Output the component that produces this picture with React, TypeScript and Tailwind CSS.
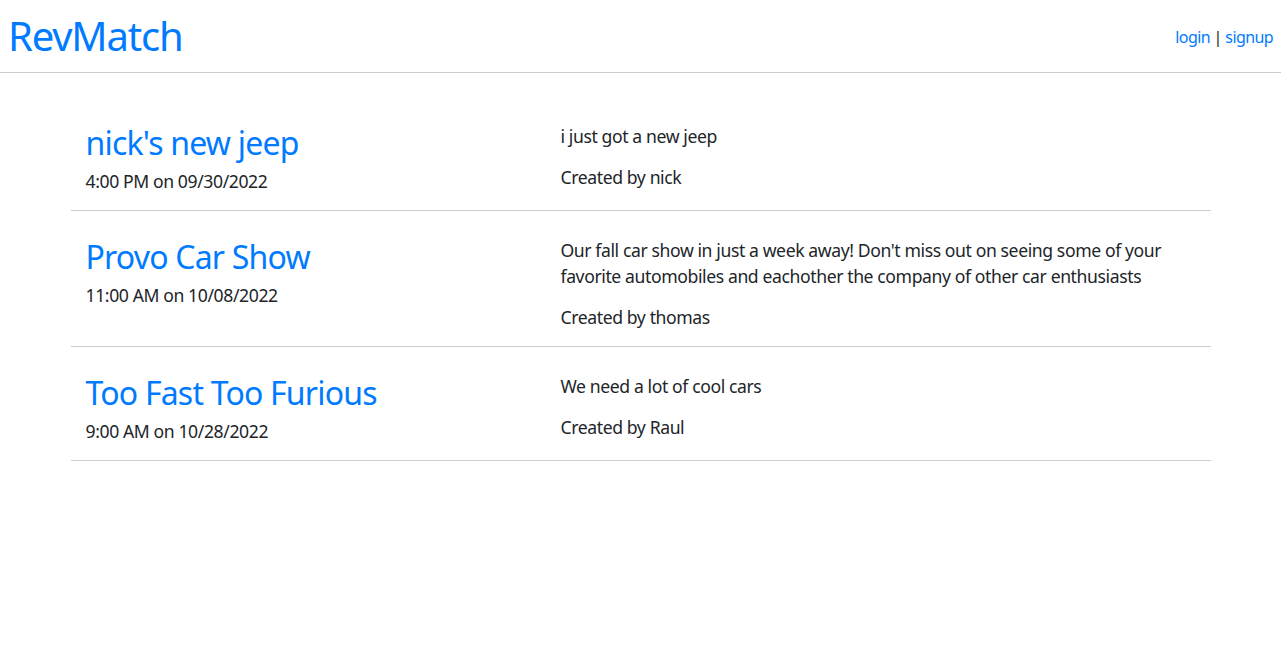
const events = [
  {
    title: "nick's new jeep",
    when: "4:00 PM on 09/30/2022",
    description: "i just got a new jeep",
    creator: "nick",
  },
  {
    title: "Provo Car Show",
    when: "11:00 AM on 10/08/2022",
    description:
      "Our fall car show in just a week away! Don't miss out on seeing some of your favorite automobiles and eachother the company of other car enthusiasts",
    creator: "thomas",
  },
  {
    title: "Too Fast Too Furious",
    when: "9:00 AM on 10/28/2022",
    description: "We need a lot of cool cars",
    creator: "Raul",
  },
];

export default function App() {
  return (
    <div className="min-h-screen bg-white font-['Segoe_UI','Noto_Sans',sans-serif] text-[#212529]">
      <header className="h-[73px] px-2 flex items-center justify-between border-b border-[#cccccc]">
        <a href="#" className="text-[40px] leading-[48px] tracking-[-1.2px] text-[#007bff]">
          RevMatch
        </a>
        <div className="text-base tracking-[-0.6px] mt-0.5">
          <a href="#" className="text-[#007bff]">login</a> |{" "}
          <a href="#" className="text-[#007bff]">signup</a>
        </div>
      </header>

      <div className="max-w-[1140px] mx-auto mt-6">
        {events.map((ev) => (
          <div key={ev.title} className="flex pt-6 pb-4 border-b border-[#cccccc]">
            <div className="w-5/12 px-[15px] pt-[3px]">
              <h2 className="text-[32px] leading-[38px] tracking-[-0.8px] text-[#007bff] mb-1.5">{ev.title}</h2>
              <div className="text-[17.6px] leading-[26px] tracking-[-0.4px]">{ev.when}</div>
            </div>
            <div className="w-7/12 px-[15px] pt-[2px] text-[17.6px] leading-[26px] tracking-[-0.4px]">
              <p className="mb-[15px]">{ev.description}</p>
              <p>Created by {ev.creator}</p>
            </div>
          </div>
        ))}
      </div>
    </div>
  );
}
